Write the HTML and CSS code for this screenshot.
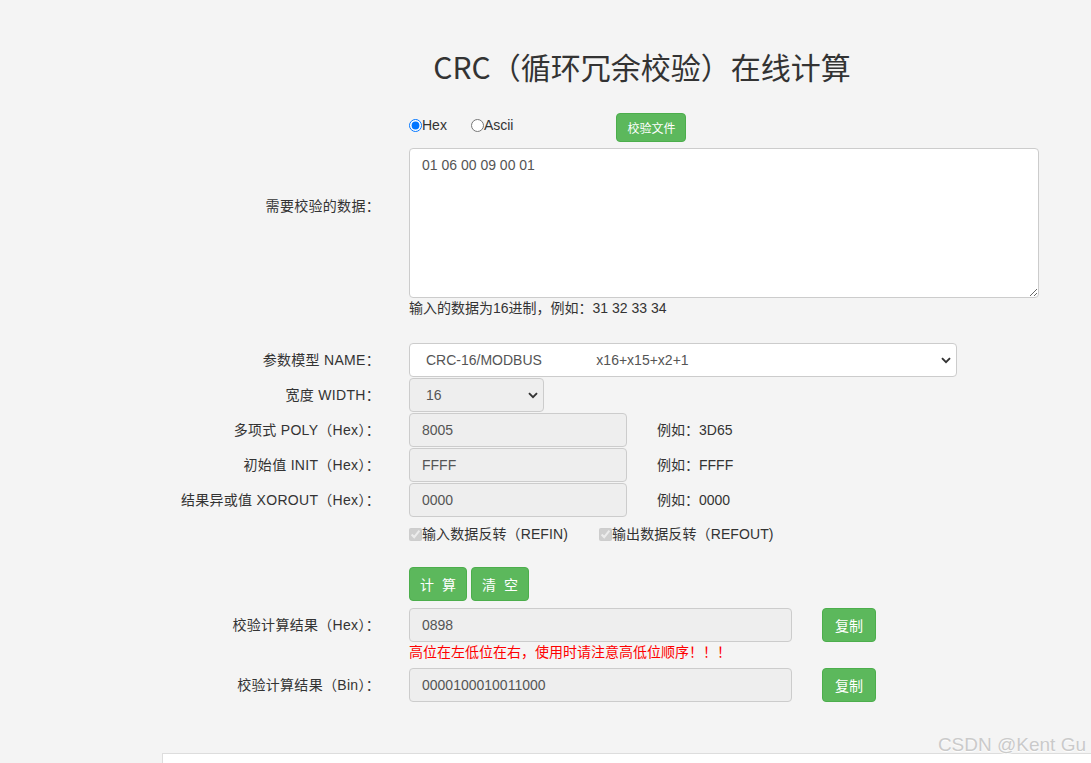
FILE: index.html
```html
<!DOCTYPE html>
<html lang="zh-CN">
<head>
<meta charset="utf-8">
<title>CRC（循环冗余校验）在线计算</title>
<link rel="stylesheet" href="styles.css">
</head>
<body>
<div class="page">
  <h1 class="title">CRC（循环冗余校验）在线计算</h1>

  <div class="form">
    <div class="row row-data">
      <label class="lbl">需要校验的数据：</label>
      <div class="ctl">
        <div class="radios">
          <label class="radio"><input type="radio" name="fmt" checked>Hex</label>
          <label class="radio"><input type="radio" name="fmt">Ascii</label>
          <button class="btn btn-file">校验文件</button>
        </div>
        <textarea class="textarea">01 06 00 09 00 01</textarea>
      </div>
    </div>
    <div class="row row-hint">
      <div class="lbl"></div>
      <div class="ctl hint">输入的数据为16进制，例如：31 32 33 34</div>
    </div>

    <div class="row row-field row-first">
      <label class="lbl">参数模型 NAME：</label>
      <div class="ctl">
        <div class="select-wrap w-name">
          <select class="select sel-white"><option>CRC-16/MODBUS&nbsp;&nbsp;&nbsp;&nbsp;&nbsp;&nbsp;&nbsp;&nbsp;&nbsp;&nbsp;&nbsp;&nbsp;&nbsp;&nbsp;x16+x15+x2+1</option></select>
          <svg class="chev" width="10" height="7" viewBox="0 0 10 7"><path d="M1 1.2 L5 5.2 L9 1.2" fill="none" stroke="#333" stroke-width="1.9"/></svg>
        </div>
      </div>
    </div>
    <div class="row row-field">
      <label class="lbl">宽度 WIDTH：</label>
      <div class="ctl">
        <div class="select-wrap w-width">
          <select class="select sel-gray"><option>16</option></select>
          <svg class="chev" width="10" height="7" viewBox="0 0 10 7"><path d="M1 1.2 L5 5.2 L9 1.2" fill="none" stroke="#333" stroke-width="1.9"/></svg>
        </div>
      </div>
    </div>
    <div class="row row-field">
      <label class="lbl">多项式 POLY（Hex）：</label>
      <div class="ctl inline">
        <input class="input w-short" type="text" value="8005" readonly>
        <span class="example">例如：3D65</span>
      </div>
    </div>
    <div class="row row-field">
      <label class="lbl">初始值 INIT（Hex）：</label>
      <div class="ctl inline">
        <input class="input w-short" type="text" value="FFFF" readonly>
        <span class="example">例如：FFFF</span>
      </div>
    </div>
    <div class="row row-field">
      <label class="lbl">结果异或值 XOROUT（Hex）：</label>
      <div class="ctl inline">
        <input class="input w-short" type="text" value="0000" readonly>
        <span class="example">例如：0000</span>
      </div>
    </div>
    <div class="row row-checks">
      <div class="lbl"></div>
      <div class="ctl inline checks">
        <label class="check"><input type="checkbox" checked disabled>输入数据反转（REFIN)</label>
        <label class="check"><input type="checkbox" checked disabled>输出数据反转（REFOUT)</label>
      </div>
    </div>
    <div class="row row-buttons">
      <div class="lbl"></div>
      <div class="ctl inline btns">
        <button class="btn btn-act">计 算</button>
        <button class="btn btn-act">清 空</button>
      </div>
    </div>
    <div class="row row-field row-result">
      <label class="lbl">校验计算结果（Hex）：</label>
      <div class="ctl inline">
        <input class="input w-long" type="text" value="0898" readonly>
        <button class="btn btn-copy">复制</button>
      </div>
    </div>
    <div class="row row-warn">
      <div class="lbl"></div>
      <div class="ctl warn">高位在左低位在右，使用时请注意高低位顺序！！！</div>
    </div>
    <div class="row row-field row-bin">
      <label class="lbl">校验计算结果（Bin）：</label>
      <div class="ctl inline">
        <input class="input w-long" type="text" value="0000100010011000" readonly>
        <button class="btn btn-copy">复制</button>
      </div>
    </div>
  </div>

  <div class="bottom-box"></div>
</div>
<div class="watermark">CSDN @Kent Gu</div>
</body>
</html>
```

FILE: styles.css
```css
html, body {
  margin: 0;
  padding: 0;
  height: 100%;
  overflow: hidden;
}
body {
  background: #f4f4f4;
  color: #333;
  font-family: "Liberation Sans", "Noto Sans CJK SC", sans-serif;
  font-size: 14px;
  line-height: 20px;
}
.page {
  padding-top: 46px;
}
.title {
  margin: 0;
  padding-left: 193px;
  text-align: center;
  font-family: "Noto Sans CJK SC", "Liberation Sans", sans-serif;
  font-weight: normal;
  font-size: 30px;
  line-height: 40px;
  color: #333;
}
.form {
  margin-top: 27px;
}
.row {
  display: flex;
  align-items: center;
}
.lbl {
  width: 380px;
  flex: none;
  text-align: right;
  margin-right: 29px;
  letter-spacing: 0.3px;
}
.ctl {
  flex: none;
}
.inline {
  display: flex;
  align-items: center;
}
.radios {
  display: flex;
  align-items: flex-start;
  height: 29px;
  margin-bottom: 6px;
}
.radio {
  display: flex;
  align-items: center;
  margin-top: 2px;
  margin-right: 24px;
}
.radio input {
  margin: 0;
  width: 13px;
  height: 13px;
}
.radio + .radio {
  margin-right: 0;
}
.btn {
  font-family: "Liberation Sans", "Noto Sans CJK SC", sans-serif;
  background: #5cb85c;
  border: 1px solid #4cae4c;
  color: #fff;
  border-radius: 4px;
  padding: 0;
  cursor: pointer;
}
.btn-file {
  margin-left: 103px;
  width: 70px;
  height: 29px;
  font-size: 12px;
}
.textarea {
  display: block;
  box-sizing: border-box;
  width: 630px;
  height: 150px;
  margin: 0;
  padding: 6px 12px;
  border: 1px solid #ccc;
  border-radius: 4px;
  background: #fff;
  color: #555;
  font-family: "Liberation Sans", "Noto Sans CJK SC", sans-serif;
  font-size: 14px;
  line-height: 20px;
}
.hint {
  line-height: 20px;
}
.row-first {
  margin-top: 25px;
}
.row-field {
  height: 34px;
  margin-bottom: 1px;
}
.select-wrap {
  position: relative;
  height: 34px;
}
.w-name { width: 548px; }
.w-width { width: 135px; }
.select {
  appearance: none;
  -webkit-appearance: none;
  box-sizing: border-box;
  width: 100%;
  height: 34px;
  margin: 0;
  padding: 0 28px 0 16px;
  border: 1px solid #ccc;
  border-radius: 4px;
  color: #555;
  font-family: "Liberation Sans", "Noto Sans CJK SC", sans-serif;
  font-size: 14px;
}
.sel-white { background: #fff; }
.sel-gray { background: #eee; }
.chev {
  position: absolute;
  right: 6px;
  top: 14px;
  pointer-events: none;
}
.input {
  box-sizing: border-box;
  height: 34px;
  margin: 0;
  padding: 6px 12px;
  border: 1px solid #ccc;
  border-radius: 4px;
  background: #eee;
  color: #555;
  font-family: "Liberation Sans", "Noto Sans CJK SC", sans-serif;
  font-size: 14px;
  outline: none;
}
.w-short { width: 218px; }
.w-long { width: 383px; }
.example {
  margin-left: 30px;
}
.row-checks {
  height: 32px;
  margin-top: 1px;
}
.checks .check {
  display: flex;
  align-items: center;
  letter-spacing: 0.1px;
}
.check input {
  margin: 0;
  width: 13px;
  height: 13px;
}
.check + .check {
  margin-left: 31px;
}
.row-buttons {
  margin-top: 17px;
  height: 34px;
}
.btn-act {
  box-sizing: border-box;
  width: 58px;
  height: 34px;
  font-size: 14px;
  letter-spacing: 2px;
  padding-left: 2px;
  margin-right: 4px;
}
.row-result {
  margin-top: 7px;
  margin-bottom: 0;
}
.btn-copy {
  box-sizing: border-box;
  width: 54px;
  height: 34px;
  margin-left: 30px;
  font-size: 14px;
}
.warn {
  color: #ff0000;
  line-height: 20px;
}
.row-bin {
  margin-top: 6px;
}
.bottom-box {
  margin-top: 51px;
  margin-left: 162px;
  height: 40px;
  background: #fff;
  border-top: 1px solid #ddd;
  border-left: 1px solid #ddd;
}
.watermark {
  position: absolute;
  right: 5px;
  top: 733px;
  font-size: 19px;
  line-height: 24px;
  color: #cacaca;
  text-shadow: 0 1px 1px #fff;
  font-family: "Liberation Sans", sans-serif;
}
```
